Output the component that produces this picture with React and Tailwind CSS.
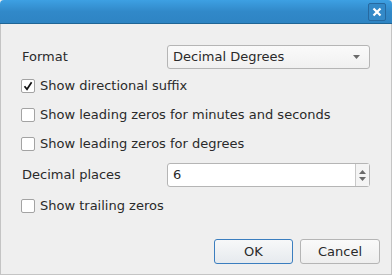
export default function App() {
  const Check = ({ checked, label, className = "" }) => (
    <div className={`flex h-[24px] items-center ${className}`}>
      <div className="flex h-[14px] w-[14px] items-center justify-center rounded-[2px] border border-[#a3a3a3] bg-white">
        {checked ? (
          <svg width="10" height="10" viewBox="0 0 10 10">
            <path d="M1.5 5.2 L4 8.3 L8.6 1.2" fill="none" stroke="#111" strokeWidth="1.7" />
          </svg>
        ) : null}
      </div>
      <span className="ml-[5px]">{label}</span>
    </div>
  );

  return (
    <div
      className="flex h-[275px] w-[392px] flex-col overflow-hidden bg-[#efefef] text-[13px] text-[#2a2a2a]"
      style={{ fontFamily: '"DejaVu Sans", sans-serif' }}
    >
      <div className="flex h-[24px] shrink-0 items-center justify-end rounded-t-[4px] border-b border-[#1f6595] bg-gradient-to-b from-[#3da0e3] via-[#3189c9] to-[#2e84c3] pr-[6px]">
        <div className="flex h-[18px] w-[18px] items-center justify-center rounded-[2px] border border-[#2669a0] bg-[#3389c8]">
          <svg width="10" height="10" viewBox="0 0 10 10">
            <path d="M1.5 1.5 L8.5 8.5 M8.5 1.5 L1.5 8.5" stroke="#fff" strokeWidth="2.2" />
          </svg>
        </div>
      </div>

      <div className="flex flex-1 flex-col border-x border-b border-[#c4c4c4] pl-[20px] pr-[21px]">
        <div className="mt-[21px] flex h-[24px] items-center">
          <span className="ml-[1px] w-[145px]">Format</span>
          <div className="flex h-[24px] flex-1 items-center justify-between rounded-[3px] border border-[#b5b5b5] bg-gradient-to-b from-[#fafafa] to-[#f0f0f0] pl-[5px] pr-[9px]">
            <span>Decimal Degrees</span>
            <svg width="7" height="4" viewBox="0 0 7 4">
              <path d="M0 0 L7 0 L3.5 4 Z" fill="#6a6a6a" />
            </svg>
          </div>
        </div>

        <Check checked label="Show directional suffix" className="mt-[5px]" />
        <Check label="Show leading zeros for minutes and seconds" className="mt-[5px]" />
        <Check label="Show leading zeros for degrees" className="mt-[5px]" />

        <div className="mt-[7px] flex h-[24px] items-center">
          <span className="ml-[1px] w-[145px]">Decimal places</span>
          <div className="flex h-[24px] flex-1 items-stretch rounded-[3px] border border-[#b5b5b5] bg-white">
            <div className="flex flex-1 items-center pl-[5px]">6</div>
            <div className="flex w-[14px] flex-col items-center justify-center gap-[3px] border-l border-[#c8c8c8] bg-[#f4f4f4]">
              <svg width="7" height="4" viewBox="0 0 7 4">
                <path d="M0 4 L7 4 L3.5 0 Z" fill="#6a6a6a" />
              </svg>
              <svg width="7" height="4" viewBox="0 0 7 4">
                <path d="M0 0 L7 0 L3.5 4 Z" fill="#6a6a6a" />
              </svg>
            </div>
          </div>
        </div>

        <Check label="Show trailing zeros" className="mt-[7px]" />

        <div className="mr-[-10px] mt-[21px] flex justify-end gap-[7px]">
          <button className="h-[25px] w-[79px] rounded-[3px] border border-[#3b7ebf] bg-gradient-to-b from-[#f7f8f9] to-[#e6eaee] text-[#2a2a2a]">
            OK
          </button>
          <button className="h-[25px] w-[80px] rounded-[3px] border border-[#b5b5b5] bg-gradient-to-b from-[#fafafa] to-[#eeeeee] text-[#2a2a2a]">
            Cancel
          </button>
        </div>
      </div>
    </div>
  );
}
